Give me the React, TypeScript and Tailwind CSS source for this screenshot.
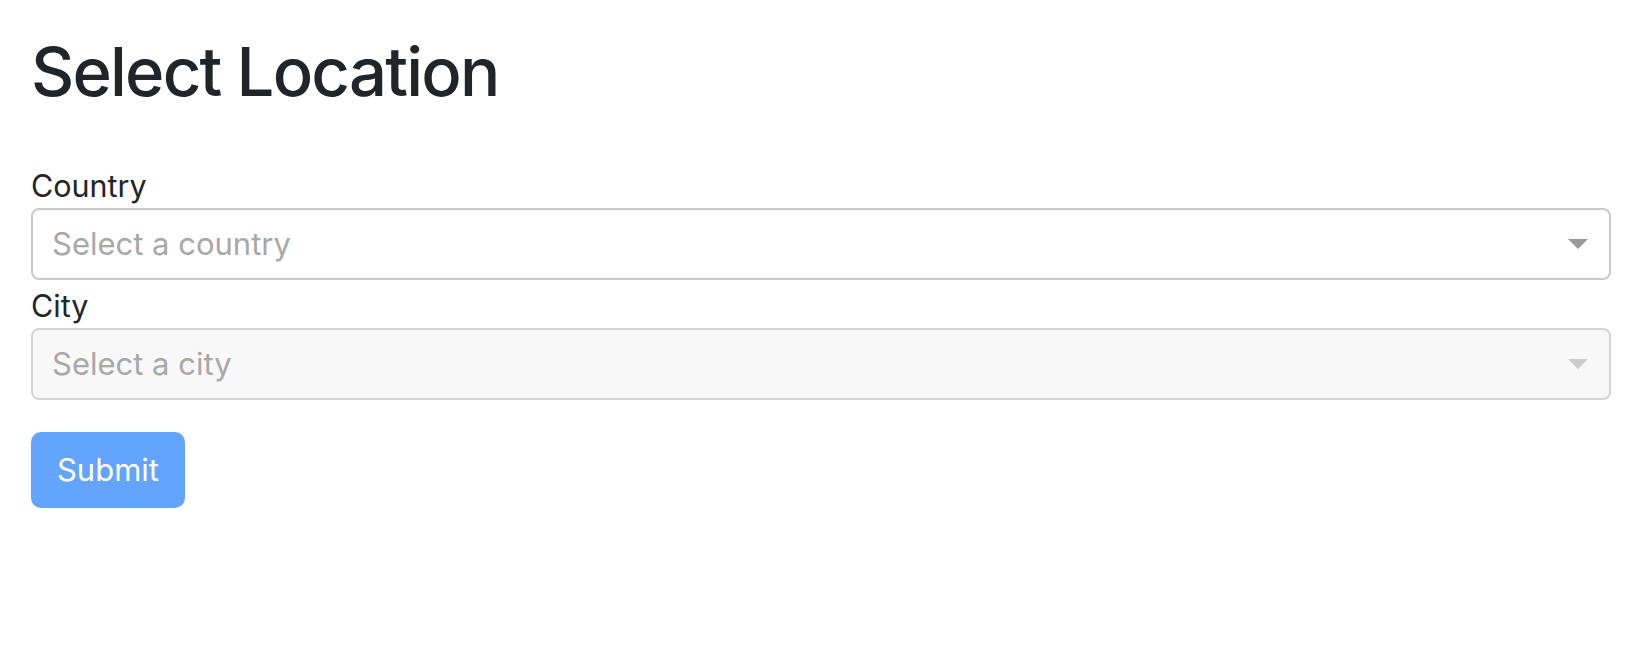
import React from "react";

function Arrow({ color }: { color: string }) {
  return (
    <svg width="20" height="10" viewBox="0 0 20 10" className="shrink-0">
      <polygon points="0,0 20,0 10,10" fill={color} />
    </svg>
  );
}

export default function App() {
  return (
    <div
      className="min-h-screen bg-white px-[31px] pt-[32px] text-[#212529]"
      style={{ fontFamily: "Inter, 'Noto Sans', sans-serif" }}
    >
      <h1 className="text-[67px] font-medium leading-[80px] tracking-[-1.8px]">Select Location</h1>
      <div className="mt-[51px]">
        <label className="block text-[30.5px] leading-[45px]">Country</label>
        <div className="flex h-[72px] items-center justify-between rounded-[8px] border-2 border-[#c9c9c9] bg-white pl-[19px] pr-[21px]">
          <span className="text-[31px] text-[#a8a8a8]">Select a country</span>
          <Arrow color="#999999" />
        </div>
        <label className="mt-[3px] block text-[30.5px] leading-[45px]">City</label>
        <div className="flex h-[72px] items-center justify-between rounded-[8px] border-2 border-[#d4d4d4] bg-[#f8f8f8] pl-[19px] pr-[21px]">
          <span className="text-[31px] text-[#a8a8a8]">Select a city</span>
          <Arrow color="#cccccc" />
        </div>
        <button className="mt-[32px] h-[76px] w-[154px] rounded-[10px] bg-[#63a4ff] text-[31px] text-white">
          Submit
        </button>
      </div>
    </div>
  );
}
